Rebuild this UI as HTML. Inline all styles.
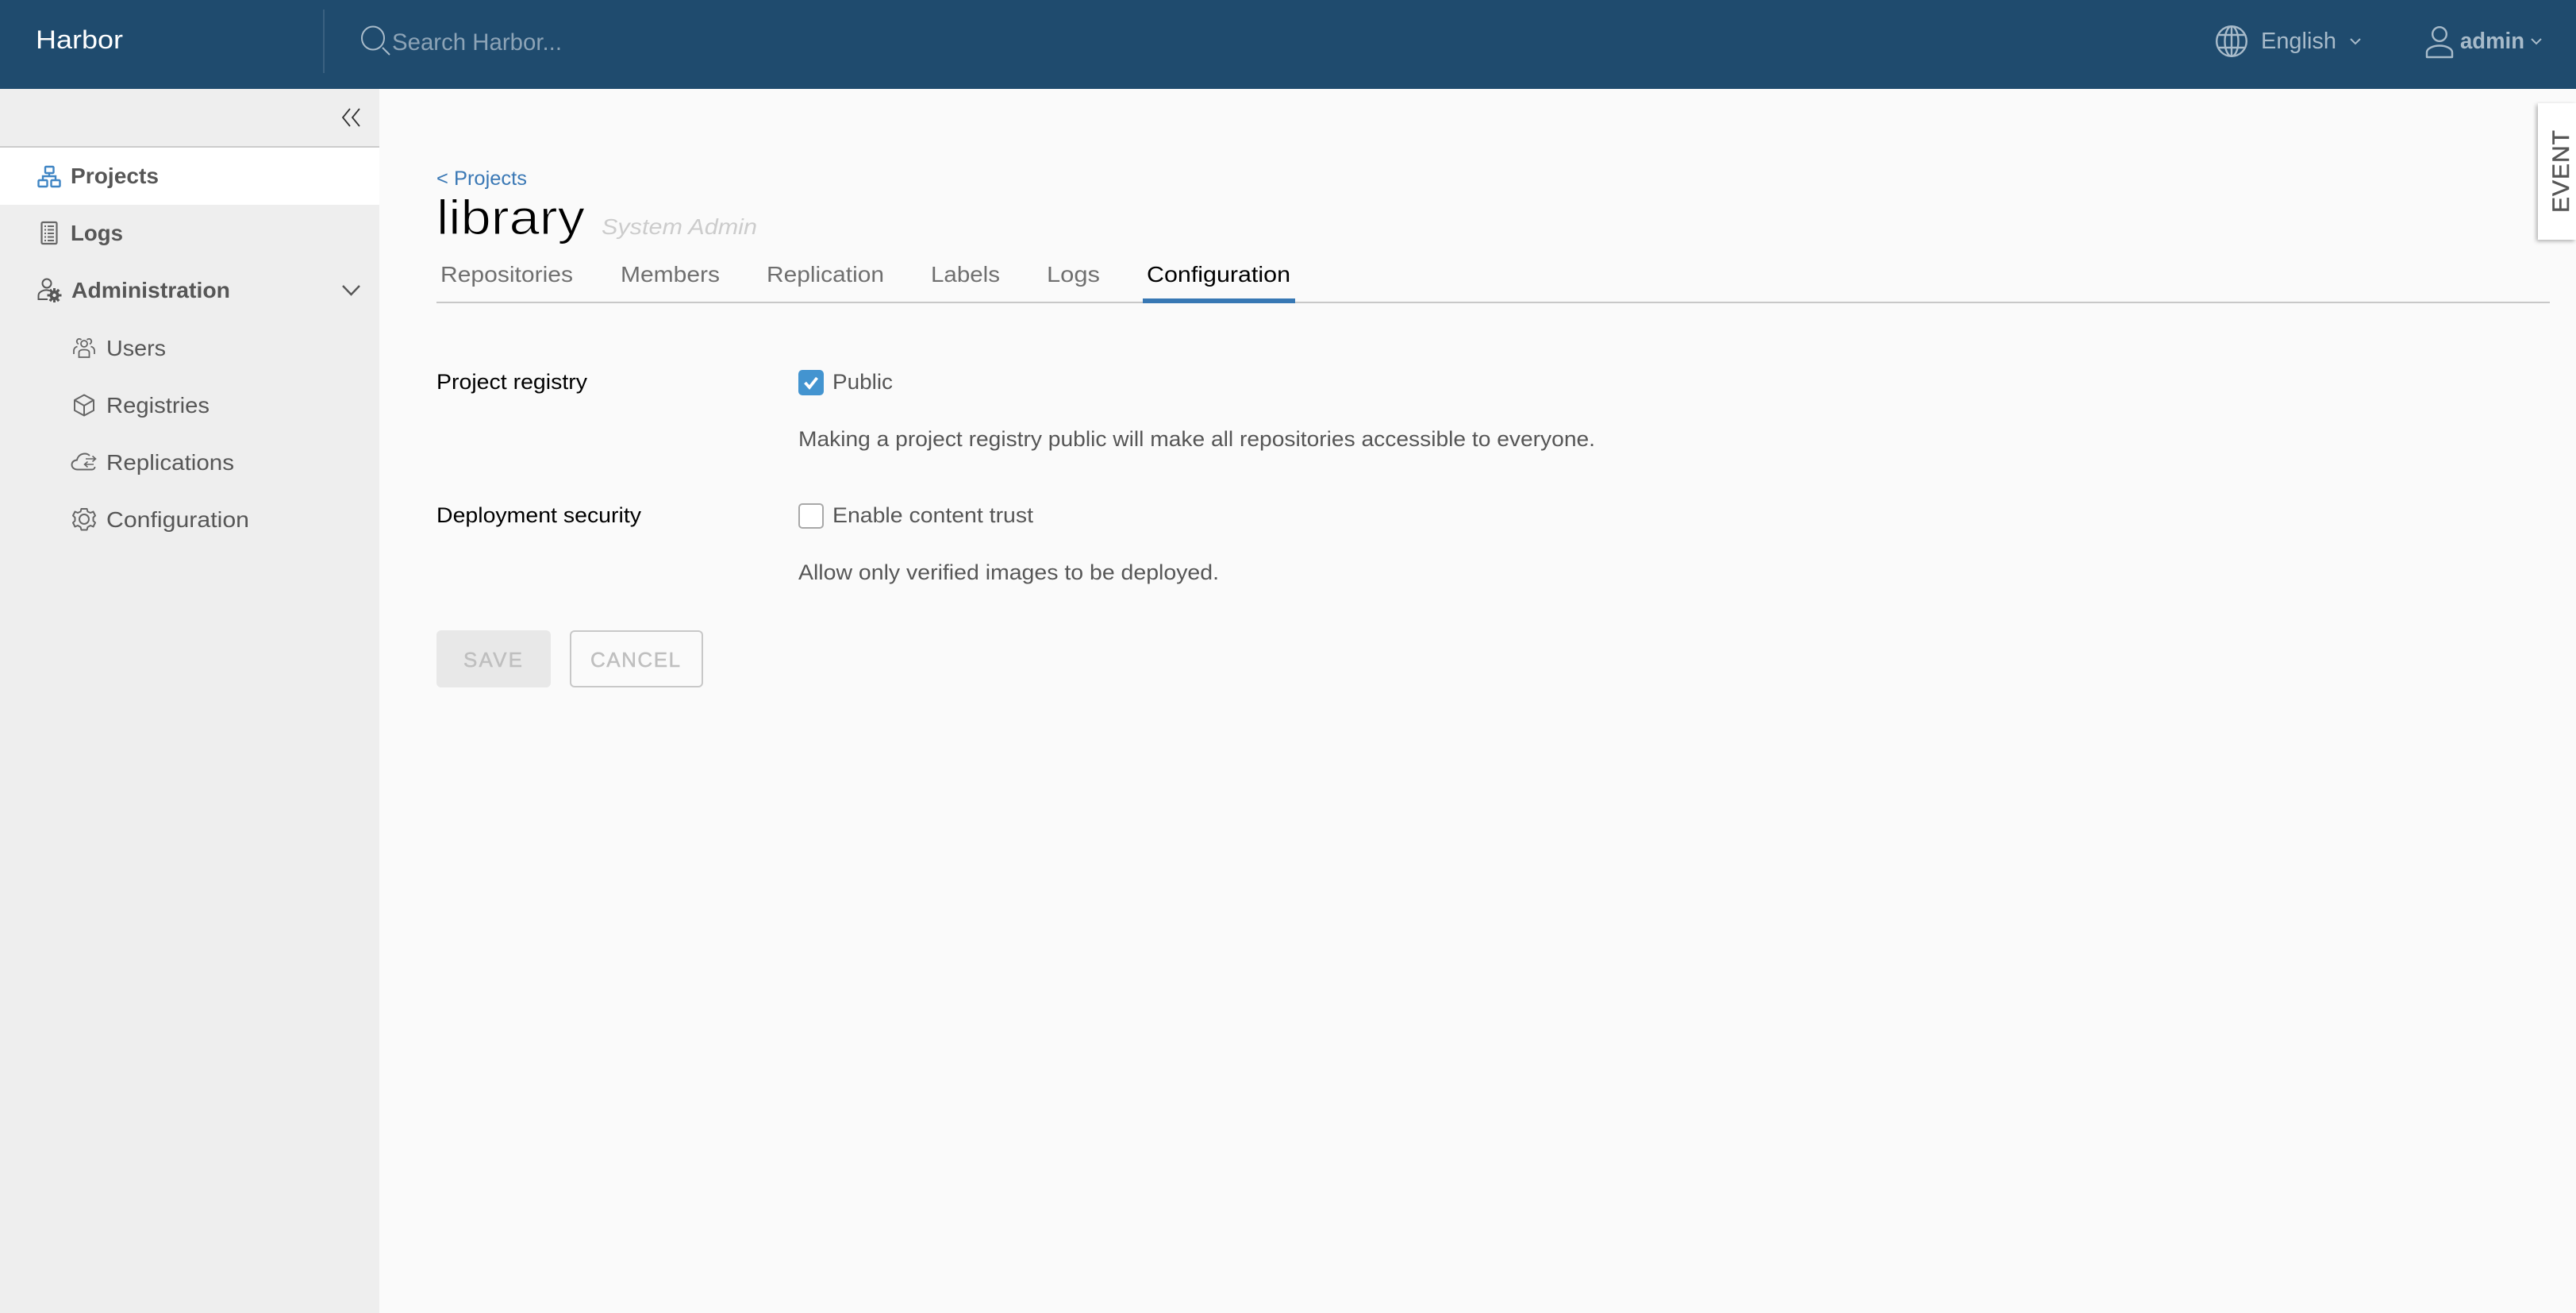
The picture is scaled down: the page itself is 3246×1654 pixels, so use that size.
<!DOCTYPE html>
<html lang="en"><head><meta charset="utf-8"><title>Harbor</title>
<style>
html,body{margin:0;padding:0;width:3246px;height:1654px;overflow:hidden;background:#fafafa}
.b{position:absolute;box-sizing:border-box}
svg{position:absolute;left:0;top:0}
text{font-family:"Liberation Sans",sans-serif}
</style></head><body>
<div class="b" style="left:0;top:0;width:3246px;height:112px;background:#1f4b6e"></div>
<div class="b" style="left:407px;top:12px;width:1.5px;height:80px;background:#3a6180"></div>
<div class="b" style="left:0;top:112px;width:478px;height:1542px;background:#eee"></div>
<div class="b" style="left:0;top:184px;width:478px;height:2px;background:#ccc"></div>
<div class="b" style="left:0;top:186px;width:478px;height:72px;background:#fff"></div>
<div class="b" style="left:550px;top:380px;width:2663px;height:2px;background:#c8c8c8"></div>
<div class="b" style="left:1440px;top:376px;width:192px;height:6px;background:#3878b4"></div>
<div class="b" style="left:3198px;top:130px;width:48px;height:172px;background:#fff;box-shadow:-2px 2px 5px rgba(0,0,0,.3)"></div>
<div class="b" style="left:1006px;top:466px;width:32px;height:32px;background:#4394d0;border-radius:5px"></div>
<div class="b" style="left:1006px;top:634px;width:32px;height:32px;background:#fff;border:2px solid #a8a8a8;border-radius:5px"></div>
<div class="b" style="left:550px;top:794px;width:144px;height:72px;background:#e8e8e8;border-radius:6px"></div>
<div class="b" style="left:718px;top:794px;width:168px;height:72px;border:2px solid #c8c8c8;border-radius:6px"></div>
<svg width="3246" height="1654" viewBox="0 0 3246 1654" xmlns="http://www.w3.org/2000/svg">
<g font-size="27">
<text x="45" y="61" font-size="32" fill="#fff" textLength="110" lengthAdjust="spacingAndGlyphs">Harbor</text>
<text x="494" y="63" font-size="30" fill="#8ca3b6" textLength="214" lengthAdjust="spacingAndGlyphs">Search Harbor...</text>
<text x="2849" y="61" font-size="29" fill="#a8bbca" textLength="95" lengthAdjust="spacingAndGlyphs">English</text>
<text x="3100" y="61" font-size="29" font-weight="bold" fill="#a8bbca" textLength="81" lengthAdjust="spacingAndGlyphs">admin</text>

<g fill="#565656" font-size="28">
<text x="89" y="231" font-weight="bold" textLength="111" lengthAdjust="spacingAndGlyphs">Projects</text>
<text x="89" y="303" font-weight="bold" textLength="66" lengthAdjust="spacingAndGlyphs">Logs</text>
<text x="90" y="375" font-weight="bold" textLength="200" lengthAdjust="spacingAndGlyphs">Administration</text>
<text x="134" y="448" textLength="75" lengthAdjust="spacingAndGlyphs">Users</text>
<text x="134" y="520" textLength="130" lengthAdjust="spacingAndGlyphs">Registries</text>
<text x="134" y="592" textLength="161" lengthAdjust="spacingAndGlyphs">Replications</text>
<text x="134" y="664" textLength="180" lengthAdjust="spacingAndGlyphs">Configuration</text>
</g>

<text x="550" y="233" font-size="25" fill="#3a78b5" textLength="114" lengthAdjust="spacingAndGlyphs">&lt; Projects</text>
<text x="550" y="295" font-size="61" fill="#000" stroke="#fafafa" stroke-width="1.1" textLength="187" lengthAdjust="spacingAndGlyphs">library</text>
<text x="758" y="295" font-size="28" font-style="italic" fill="#ccc" textLength="196" lengthAdjust="spacingAndGlyphs">System Admin</text>

<g font-size="28" fill="#6f6f6f">
<text x="555" y="355" textLength="167" lengthAdjust="spacingAndGlyphs">Repositories</text>
<text x="782" y="355" textLength="125" lengthAdjust="spacingAndGlyphs">Members</text>
<text x="966" y="355" textLength="148" lengthAdjust="spacingAndGlyphs">Replication</text>
<text x="1173" y="355" textLength="87" lengthAdjust="spacingAndGlyphs">Labels</text>
<text x="1319" y="355" textLength="67" lengthAdjust="spacingAndGlyphs">Logs</text>
<text x="1445" y="355" fill="#000" textLength="181" lengthAdjust="spacingAndGlyphs">Configuration</text>
</g>

<text x="550" y="490" fill="#000" textLength="190" lengthAdjust="spacingAndGlyphs">Project registry</text>
<text x="1049" y="490" fill="#565656" textLength="76" lengthAdjust="spacingAndGlyphs">Public</text>
<text x="1006" y="562" fill="#565656" textLength="1004" lengthAdjust="spacingAndGlyphs">Making a project registry public will make all repositories accessible to everyone.</text>
<text x="550" y="658" fill="#000" textLength="258" lengthAdjust="spacingAndGlyphs">Deployment security</text>
<text x="1049" y="658" fill="#565656" textLength="253" lengthAdjust="spacingAndGlyphs">Enable content trust</text>
<text x="1006" y="730" fill="#565656" textLength="530" lengthAdjust="spacingAndGlyphs">Allow only verified images to be deployed.</text>
<text x="584" y="840" font-size="26" fill="#bfbfbf" stroke="#bfbfbf" stroke-width=".5" textLength="74" lengthAdjust="spacing">SAVE</text>
<text x="744" y="840" font-size="26" fill="#bfbfbf" stroke="#bfbfbf" stroke-width=".5" textLength="113" lengthAdjust="spacing">CANCEL</text>
<text transform="translate(3237 268) rotate(-90)" font-size="30" fill="#565656" stroke="#565656" stroke-width=".5" textLength="104" lengthAdjust="spacing">EVENT</text>
</g>

<!-- search -->
<g fill="none" stroke="#a8bbca" stroke-width="2">
<ellipse cx="470" cy="48" rx="14" ry="14.5"/><path d="M482 60L491 69"/>
</g>
<!-- globe -->
<g fill="none" stroke="#a8bbca" stroke-width="2.4">
<circle cx="2812" cy="52" r="18.800"/>
<ellipse cx="2812" cy="52" rx="8.500" ry="18.800"/>
<path d="M2812 33.500V70.500M2796 44H2828M2796 60H2828"/>
</g>
<path d="M2962 49L2968 55L2974 49M3190 49L3196 55L3202 49" fill="none" stroke="#a8bbca" stroke-width="2"/>
<!-- user -->
<g fill="none" stroke="#a8bbca" stroke-width="2.4">
<circle cx="3074" cy="43" r="8.800"/>
<path d="M3058 72V66C3058 61 3066 57.500 3074 57.500C3082 57.500 3090 61 3090 66V72Z" stroke-linejoin="round"/>
</g>
<!-- collapse -->
<path d="M441 137L432 148L441 159M453 137L444 148L453 159" fill="none" stroke="#333" stroke-width="1.800"/>
<!-- projects icon -->
<g fill="none" stroke="#3f85c4" stroke-width="2.400">
<rect x="57" y="210" width="10.500" height="8" rx="1"/>
<rect x="48.500" y="227" width="11" height="8" rx="1"/>
<rect x="64.500" y="227" width="11" height="8" rx="1"/>
<path d="M62 218.500V222M54 227V222H70V227"/>
</g>
<!-- logs icon -->
<g fill="none" stroke="#666">
<rect x="52.500" y="280" width="19" height="27" rx="1.500" stroke-width="2.200"/>
<path d="M56 285H58M60 285H68M56 289.500H58M60 289.500H68M56 294H58M60 294H68M56 298.500H58M60 298.500H68M56 303H58M60 303H68" stroke-width="2"/>
</g>
<!-- admin icon -->
<g fill="none" stroke="#565656" stroke-width="2">
<circle cx="59" cy="357" r="5.500"/>
<path d="M62 366C55 364 48.500 368 48.500 372V377H60"/>
</g>
<g fill="#565656">
<circle cx="68.500" cy="372" r="6"/>
<path d="M67 363H70V367H67ZM67 377H70V381H67ZM59.500 370.500H63.500V373.500H59.500ZM73.500 370.500H77.500V373.500H73.500ZM61.500 366L64 363.800L66.500 366.500L64 368.500ZM73 363.800L75.500 366L73 368.500L70.500 366.500ZM61.500 378L64 375.500L66.500 377.500L64 380.200ZM70.500 377.500L73 375.500L75.500 378L73 380.200Z"/>
</g>
<circle cx="68.500" cy="372" r="2.200" fill="#eee"/>
<!-- users icon -->
<g fill="none" stroke="#666" stroke-width="1.800">
<circle cx="106" cy="433" r="4"/>
<path d="M99.500 450V444C99.500 441.500 102 440.500 106 440.500C110 440.500 112.500 441.500 112.500 444V450Z"/>
<path d="M102.500 428C101 426.500 98.500 426.500 97.500 428C96 430 97 432.500 99 433.500"/>
<path d="M109.500 428C111 426.500 113.500 426.500 114.500 428C116 430 115 432.500 113 433.500"/>
<path d="M97.500 436.500C95 437 93 439 93 441.500V446"/>
<path d="M114.500 436.500C117 437 119 439 119 441.500V446"/>
</g>
<!-- registries cube -->
<g fill="none" stroke="#666" stroke-width="2" stroke-linejoin="round">
<path d="M106 497.500L118 504V517L106 523.500L94 517V504Z"/>
<path d="M94 504L106 511L118 504M106 511V523.500"/>
</g>
<!-- replications cloud -->
<g fill="none" stroke="#666" stroke-width="1.900">
<path d="M116 591.500H98C93 591.500 90.500 588.500 90.500 585.500C90.500 582 93 580 97 579.500C98 574.500 102 571.500 107 571.500C109.500 571.500 111.500 572.500 113 574"/>
<path d="M116 591.500C118 591.500 119.500 590 119.500 588"/>
<path d="M108 578H120M116.500 574.500L120.500 578L116.500 581.500M118 585H107M110.500 581.500L106.500 585L110.500 588.500" stroke-width="1.600"/>
</g>
<!-- configuration gear -->
<g fill="none" stroke="#666" stroke-width="2" stroke-linejoin="round">
<circle cx="106" cy="654" r="6"/>
<path d="M102.500 641L109.500 641L110.500 644.500L114 646L117.500 644.500L120 649.500L117.500 652L117.500 656L120 658.500L117.500 663.500L114 662L110.500 664L109.500 667.500L102.500 667.500L101.500 664L98 662L94.500 663.500L92 658.500L94.500 656L94.500 652L92 649.500L94.500 644.500L98 646L101.500 644.500Z"/>
</g>
<path d="M432 360L442.500 371L453 360" fill="none" stroke="#565656" stroke-width="2.400"/>
<!-- check -->
<path d="M1014.500 482L1020 488L1029.500 476" fill="none" stroke="#fff" stroke-width="3.800"/>
</svg>
</body></html>
